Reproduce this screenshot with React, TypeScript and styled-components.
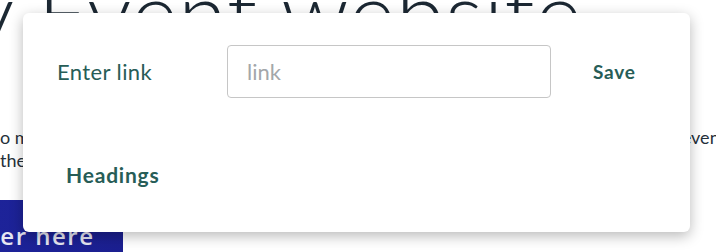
import React from 'react';
import styled, { createGlobalStyle } from 'styled-components';

const GlobalStyle = createGlobalStyle`
  html, body {
    margin: 0;
    padding: 0;
    background: #fff;
    overflow: hidden;
  }
  body {
    font-family: Lato, "Open Sans", sans-serif;
  }
`;

const Page = styled.div`
  position: relative;
  width: 716px;
  height: 252px;
  overflow: hidden;
`;

const Title = styled.h1`
  font-family: Lato, sans-serif;
  font-weight: 300;
  font-size: 88px;
  line-height: 1;
  letter-spacing: 1px;
  color: #1c2833;
  margin: -32px 0 0 -30px;
  white-space: nowrap;
`;

const Paragraph = styled.div`
  margin-top: 70px;
  font-size: 18px;
  line-height: 23px;
  color: #25303a;
`;

const TextLine = styled.div`
  display: flex;
  justify-content: space-between;
  white-space: nowrap;
  margin-right: -10px;
`;

const CallToAction = styled.button`
  display: block;
  margin-top: 28px;
  margin-left: -139px;
  padding: 10px 28px 0 60px;
  height: 60px;
  border: none;
  background: linear-gradient(90deg, #1f27a3, #1b1f90);
  color: #e6e6f2;
  font-family: "Open Sans", sans-serif;
  font-size: 24px;
  font-weight: 600;
  letter-spacing: 1.5px;
  text-align: left;
  white-space: nowrap;
`;

const Card = styled.div`
  position: absolute;
  top: 13px;
  left: 23px;
  width: 667px;
  height: 219px;
  box-sizing: border-box;
  padding: 32px 34px;
  background: #fff;
  border-radius: 6px;
  box-shadow: 0 4px 14px rgba(0, 0, 0, 0.28);
  display: flex;
  flex-direction: column;
`;

const LinkRow = styled.div`
  display: flex;
  align-items: center;
`;

const Label = styled.label`
  width: 170px;
  font-size: 22px;
  letter-spacing: 0.4px;
  color: #275d57;
`;

const LinkInput = styled.input`
  box-sizing: border-box;
  width: 324px;
  height: 53px;
  padding: 0 19px;
  border: 1px solid #c6c6c6;
  border-radius: 4px;
  font-family: Lato, sans-serif;
  font-size: 22px;
  color: #333;
  outline: none;
  &::placeholder {
    color: #a3a7aa;
  }
`;

const TextButton = styled.button<{ $size: number }>`
  border: none;
  background: none;
  padding: 8px 0;
  font-family: Lato, sans-serif;
  font-weight: 700;
  font-size: ${(p) => p.$size}px;
  letter-spacing: 0.8px;
  color: #275d57;
  cursor: pointer;
`;

const SaveButton = styled(TextButton)`
  margin-left: 42px;
`;

const HeadingsButton = styled(TextButton)`
  align-self: flex-start;
  margin: 56px 0 0 9px;
`;

const App = (): JSX.Element => {
  return (
    <Page>
      <GlobalStyle />
      <Title>y Event website</Title>
      <Paragraph>
        <TextLine>
          <span>o make your own</span>
          <span>event</span>
        </TextLine>
        <TextLine>
          <span>the</span>
        </TextLine>
      </Paragraph>
      <CallToAction>Register here</CallToAction>
      <Card>
        <LinkRow>
          <Label>Enter link</Label>
          <LinkInput placeholder="link" />
          <SaveButton $size={19}>Save</SaveButton>
        </LinkRow>
        <HeadingsButton $size={21}>Headings</HeadingsButton>
      </Card>
    </Page>
  );
};

export default App;
